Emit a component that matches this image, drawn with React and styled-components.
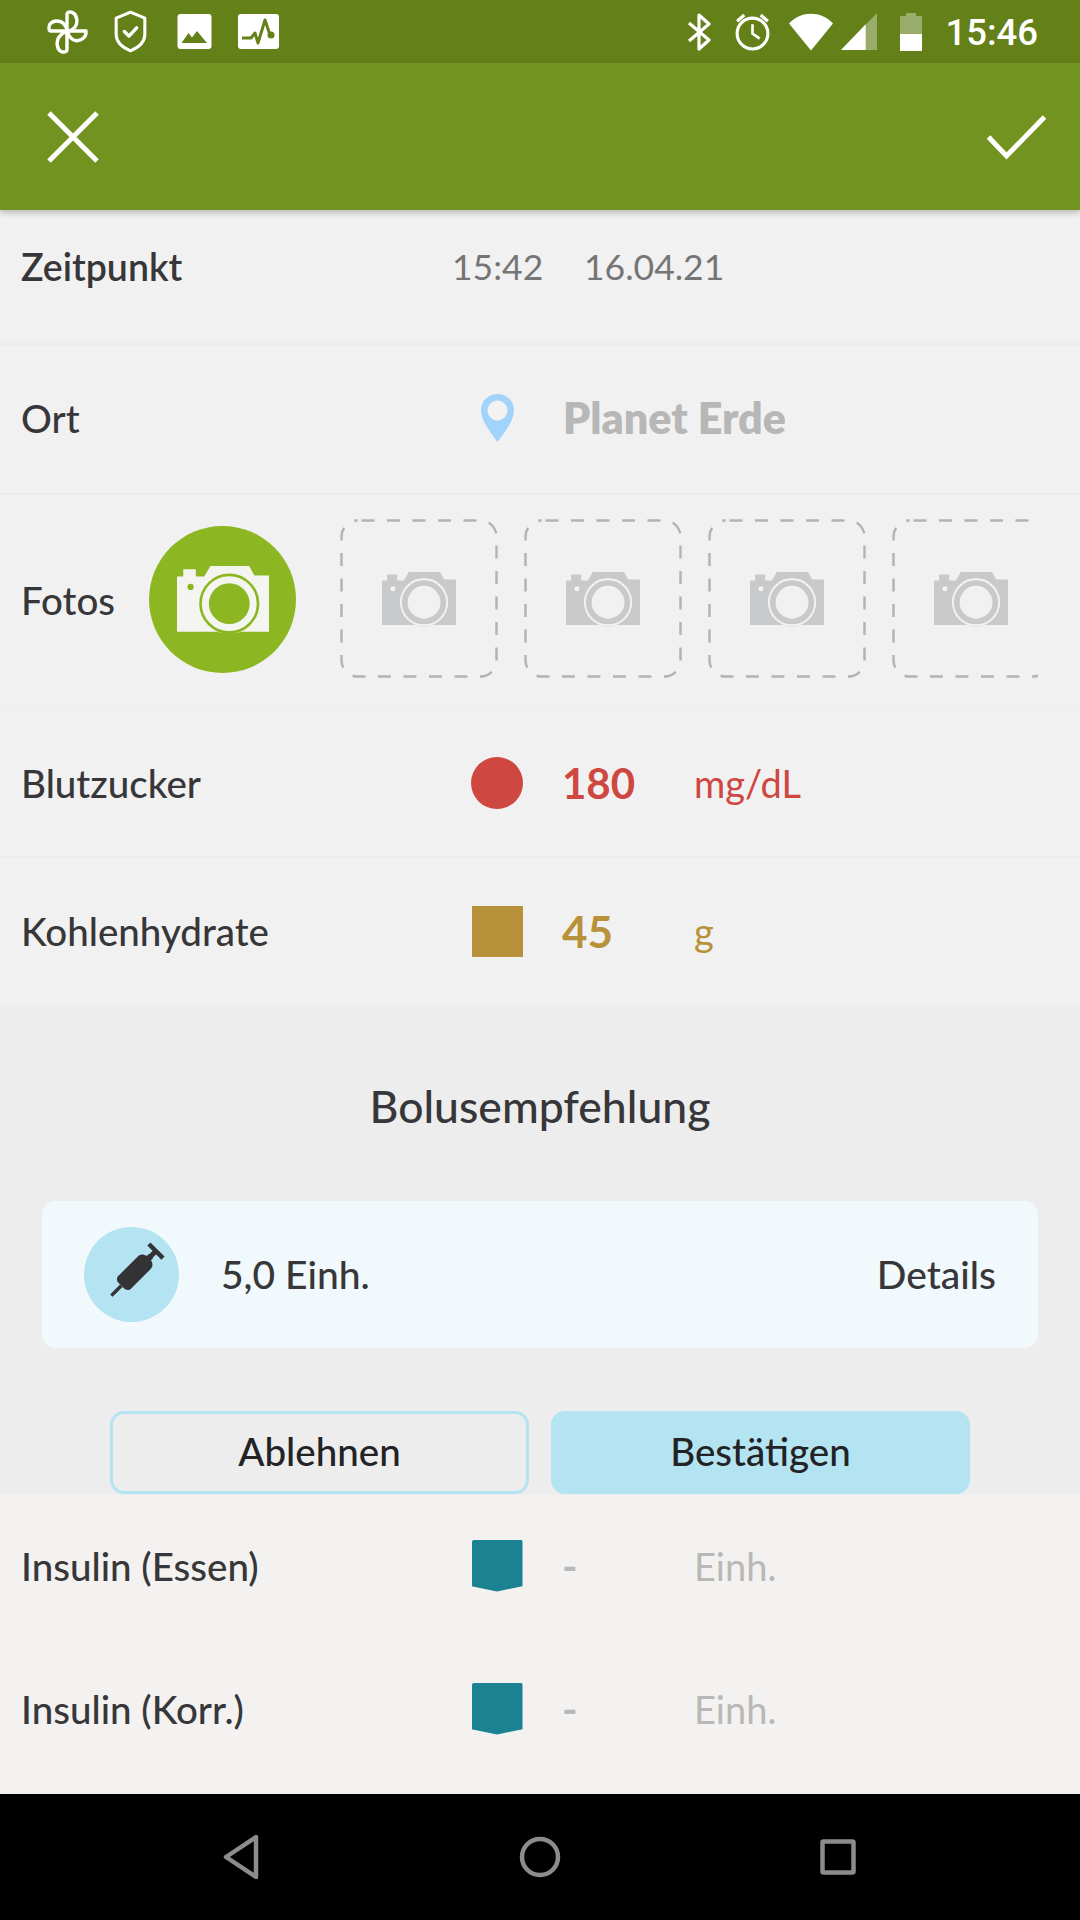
import React from "react";
import styled, { createGlobalStyle } from "styled-components";

const GlobalStyle = createGlobalStyle`
  html, body {
    margin: 0;
    padding: 0;
    background: #000;
  }
  * {
    box-sizing: border-box;
  }
`;

function StatusIcons() {
  return (
    <StatusLeft>
      <StatusItem>
        <svg width="42" height="44" viewBox="0 0 42 44" fill="none" stroke="#fff" strokeWidth="3.4" strokeLinejoin="round">
          <path d="M20 21V4.500C20 2 23 1.500 25.500 2.500C30.500 5 31 13 28 17C26 19.500 23 21 20 21Z" />
          <path d="M21 21H39C40 29 30 33 25 29C22.500 27 21 24 21 21Z" />
          <path d="M20 22V39.500C20 42 16 42.500 14 41.500C9.500 39 9 31 12 27C14 24.500 17 22 20 22Z" />
          <path d="M20 21H4C1.500 21 1.500 16 3 14C6 10 13 10 16.500 13.500C19 16 20 18.500 20 21Z" />
        </svg>
      </StatusItem>
      <StatusItem $gap={25}>
        <svg width="33" height="43" viewBox="0 0 32 42" fill="none" stroke="#fff" strokeWidth="3">
          <path d="M16 2L30 8V24C30 32 23 37 16 40C9 37 2 32 2 24V8Z" strokeLinejoin="round" />
          <path d="M10 21L14.500 25.500L22 17.500" strokeWidth="3.400" strokeLinecap="round" strokeLinejoin="round" />
        </svg>
      </StatusItem>
      <StatusItem $gap={30}>
        <svg width="35" height="35" viewBox="0 0 34 35">
          <rect width="34" height="35" rx="3" fill="#fff" />
          <path d="M4 29L11 19L14.500 23.500L19.500 17L29.500 29Z" fill="#648019" />
        </svg>
      </StatusItem>
      <StatusItem $gap={26}>
        <svg width="41" height="35" viewBox="0 0 41 35">
          <rect width="41" height="35" rx="3" fill="#fff" />
          <path d="M4 24H13L17 19L20 29L27 6L32 21" fill="none" stroke="#648019" strokeWidth="3" strokeLinejoin="round" />
          <circle cx="33" cy="21" r="3.500" fill="#648019" />
        </svg>
      </StatusItem>
    </StatusLeft>
  );
}

function StatusRight() {
  return (
    <StatusRightGroup>
      <StatusItem>
        <svg width="26" height="38" viewBox="0 0 24 38" fill="none" stroke="#fff" strokeWidth="3.200" strokeLinejoin="round">
          <path d="M2 10L22 27L12 36V2L22 11L2 28" />
        </svg>
      </StatusItem>
      <StatusItem $gap={22}>
        <svg width="37" height="39" viewBox="0 0 36 38" fill="none" stroke="#fff" strokeWidth="3">
          <circle cx="18" cy="21" r="15" />
          <path d="M18 12V21L25 26" strokeWidth="2.600" />
          <path d="M3 9L10 3M33 9L26 3" strokeWidth="3.200" />
        </svg>
      </StatusItem>
      <StatusItem $gap={18}>
        <svg width="44" height="38" viewBox="0 0 44 37">
          <path d="M0 10C12 -3 32 -3 44 10L22 37Z" fill="#fff" />
        </svg>
      </StatusItem>
      <StatusItem $gap={8}>
        <svg width="36" height="37" viewBox="0 0 35 36">
          <path d="M0 36L35 0V36Z" fill="#fff" opacity="0.35" />
          <path d="M0 36L24 11V36Z" fill="#fff" />
        </svg>
      </StatusItem>
      <StatusItem $gap={23}>
        <svg width="22" height="40" viewBox="0 0 22 38">
          <path d="M6 0H16V3H22V38H0V3H6Z" fill="#fff" opacity="0.35" />
          <path d="M0 21H22V38H0Z" fill="#fff" />
        </svg>
      </StatusItem>
      <Clock>15:46</Clock>
    </StatusRightGroup>
  );
}

function Camera({ size, body, gap }) {
  return (
    <svg width={size} height={(size * 65) / 88} viewBox="0 0 88 65">
      <path d="M0 10H6V3H18V10H26L32 0H69L74 9H88V63H0Z" fill={body} />
      <circle cx="50" cy="36" r="29" fill={body} />
      <circle cx="50" cy="36" r="27.500" fill="none" stroke={gap} strokeWidth="2.500" />
      <circle cx="50" cy="36" r="19.500" fill={gap} />
      <circle cx="13" cy="20" r="3" fill={gap} />
    </svg>
  );
}

function PhotoSlot() {
  return (
    <Slot>
      <SlotFrame width="158" height="159" viewBox="0 0 158 159">
        <rect x="1.500" y="1.500" width="155" height="156" rx="16" fill="none" stroke="#b4b4b4" strokeWidth="2.500" strokeDasharray="13 12.500" strokeDashoffset="-4" />
      </SlotFrame>
      <SlotCamera>
        <Camera size={74} body="#c8c9ca" gap="#f2f1f1" />
      </SlotCamera>
    </Slot>
  );
}

export default function App() {
  return (
    <Screen>
      <GlobalStyle />
      <StatusBar>
        <StatusIcons />
        <StatusRight />
      </StatusBar>
      <AppBar>
        <svg width="52" height="52" viewBox="0 0 52 52" stroke="#fff" strokeWidth="5">
          <path d="M2 2L50 50M50 2L2 50" />
        </svg>
        <svg width="61" height="46" viewBox="0 0 60 46" fill="none" stroke="#fff" strokeWidth="5">
          <path d="M2 23L20 42L58 3" />
        </svg>
      </AppBar>

      <TimeRow>
        <TimeLabel>Zeitpunkt</TimeLabel>
        <TimeValue>15:42</TimeValue>
        <TimeValue>16.04.21</TimeValue>
      </TimeRow>

      <PlaceRow>
        <Label>Ort</Label>
        <Marker>
          <svg width="33" height="48" viewBox="0 0 33 48">
            <path d="M16.500 0C7 0 0 7 0 16.500C0 27 10 39 16.500 48C23 39 33 27 33 16.500C33 7 26 0 16.500 0Z" fill="#a2d4fb" />
            <circle cx="16.500" cy="16.500" r="10" fill="#f3f2f0" />
          </svg>
        </Marker>
        <Place>Planet Erde</Place>
      </PlaceRow>

      <PhotoRow>
        <PhotoLabel>Fotos</PhotoLabel>
        <CameraButton>
          <Camera size={92} body="#f4f5f1" gap="#8cb622" />
        </CameraButton>
        <PhotoStrip>
          <PhotoSlot />
          <PhotoSlot />
          <PhotoSlot />
          <PhotoSlot />
        </PhotoStrip>
      </PhotoRow>

      <Row $height={146}>
        <Label>Blutzucker</Label>
        <Marker>
          <Dot />
        </Marker>
        <Value $color="#cf4741">180</Value>
        <Unit $color="#cf4741">mg/dL</Unit>
      </Row>

      <CarbRow $height={147}>
        <Label>Kohlenhydrate</Label>
        <Marker>
          <Square />
        </Marker>
        <Value $color="#b8923b" $size={44}>45</Value>
        <Unit $color="#b8923b">g</Unit>
      </CarbRow>

      <BolusSection>
        <BolusTitle>Bolusempfehlung</BolusTitle>
        <BolusCard>
          <SyringeBadge>
            <svg width="56" height="56" viewBox="0 0 56 56" fill="#333335" stroke="#333335" overflow="visible">
              <g transform="translate(2 -1) rotate(45 28 28)">
                <path d="M25 4H31V7C35 8 37 10 37 14V41C37 44 35 46 31 46H25C21 46 19 44 19 41V14C19 10 21 8 25 7Z" stroke="none" />
                <path d="M28 46V60" fill="none" strokeWidth="3.500" />
                <path d="M28 6V-3" fill="none" strokeWidth="5" />
                <path d="M18 -3H38" fill="none" strokeWidth="4.500" />
              </g>
            </svg>
          </SyringeBadge>
          <BolusAmount>5,0 Einh.</BolusAmount>
          <DetailsLink>Details</DetailsLink>
        </BolusCard>
        <BolusActions>
          <ActionButton>Ablehnen</ActionButton>
          <ActionButton $primary>Bestätigen</ActionButton>
        </BolusActions>
      </BolusSection>

      <InsulinRow>
        <Label>Insulin (Essen)</Label>
        <Marker>
          <Pennant />
        </Marker>
        <EmptyValue>-</EmptyValue>
        <Unit $color="#b8b8b8">Einh.</Unit>
      </InsulinRow>
      <InsulinRow>
        <Label>Insulin (Korr.)</Label>
        <Marker>
          <Pennant />
        </Marker>
        <EmptyValue>-</EmptyValue>
        <Unit $color="#b8b8b8">Einh.</Unit>
      </InsulinRow>
      <Spacer />

      <NavBar>
        <svg width="38" height="46" viewBox="0 0 36 46" fill="none" stroke="#8c8c8c" strokeWidth="4.500" strokeLinejoin="round">
          <path d="M33 3V43L3 23Z" />
        </svg>
        <svg width="42" height="42" viewBox="0 0 42 42" fill="none" stroke="#8c8c8c" strokeWidth="4.500">
          <circle cx="21" cy="21" r="18" />
        </svg>
        <svg width="36" height="36" viewBox="0 0 36 36" fill="none" stroke="#8c8c8c" strokeWidth="4.500">
          <rect x="2.500" y="2.500" width="31" height="31" rx="1" />
        </svg>
      </NavBar>
    </Screen>
  );
}

const Screen = styled.div`
  width: 1080px;
  height: 1920px;
  display: flex;
  flex-direction: column;
  overflow: hidden;
  background: #eeedeb;
  color: #37373a;
  font-family: Lato, "Open Sans", sans-serif;
`;

const StatusBar = styled.div`
  height: 63px;
  flex: none;
  display: flex;
  align-items: center;
  justify-content: space-between;
  padding: 0 42px 0 47px;
  background: #648019;
`;

const StatusLeft = styled.div`
  display: flex;
  align-items: center;
`;

const StatusRightGroup = styled.div`
  display: flex;
  align-items: center;
`;

const StatusItem = styled.div`
  display: flex;
  margin-left: ${(p) => p.$gap || 0}px;
`;

const Clock = styled.span`
  margin: 3px 0 0 23px;
  color: #fff;
  font-family: Roboto, sans-serif;
  font-size: 36.500px;
  font-weight: 500;
  line-height: 1;
`;

const AppBar = styled.div`
  height: 147px;
  flex: none;
  position: relative;
  z-index: 1;
  display: flex;
  align-items: center;
  justify-content: space-between;
  padding: 0 33px 0 47px;
  background: #729320;
  box-shadow: 0 3px 6px rgba(60, 60, 60, 0.3);
`;

const Row = styled.div`
  height: ${(p) => p.$height}px;
  flex: none;
  display: grid;
  grid-template-columns: 471px 91px 132px 1fr;
  align-items: center;
  padding-left: 21px;
  margin-bottom: 2px;
  background: #f2f1f1;
`;

const PlaceRow = styled(Row)`
  height: 147px;
  padding-bottom: 4px;
`;

const CarbRow = styled(Row)`
  padding-bottom: 1px;
  margin-bottom: 0;
`;

const TimeRow = styled.div`
  height: 130px;
  flex: none;
  display: flex;
  align-items: center;
  padding: 0 0 18px 21px;
  margin-bottom: 6px;
  background: #f2f1f1;
`;

const Label = styled.div`
  width: 450px;
  font-size: 38.500px;
  font-weight: 500;
  color: #37373a;
  white-space: nowrap;
`;

const TimeLabel = styled(Label)`
  width: 431px;
  font-size: 37.500px;
  font-weight: 600;
`;

const TimeValue = styled.span`
  width: 132px;
  font-size: 35.500px;
  color: #757575;
  white-space: nowrap;
`;

const Marker = styled.div`
  width: 52px;
  display: flex;
  justify-content: center;
  align-items: center;
  margin-left: -21px;
`;

const Place = styled.span`
  font-size: 43px;
  font-weight: 800;
  color: #b7b7b7;
  white-space: nowrap;
  margin-left: -20px;
`;

const Value = styled.span`
  font-size: ${(p) => p.$size || 42}px;
  font-weight: 700;
  color: ${(p) => p.$color};
  margin-left: -21px;
`;

const Unit = styled.span`
  font-size: 38px;
  color: ${(p) => p.$color};
  margin-left: -21px;
`;

const EmptyValue = styled.span`
  font-size: 42px;
  font-weight: 700;
  color: #b8b8b8;
  margin-left: -21px;
`;

const Dot = styled.div`
  width: 52px;
  height: 52px;
  border-radius: 50%;
  background: #cf4741;
`;

const Square = styled.div`
  width: 51px;
  height: 51px;
  background: #b8923b;
`;

const Pennant = styled.div`
  width: 51px;
  height: 52px;
  border-radius: 2px;
  background: #1b8291;
  clip-path: polygon(0 0, 100% 0, 100% 90%, 50% 100%, 0 90%);
`;

const PhotoRow = styled.div`
  height: 214px;
  flex: none;
  display: flex;
  align-items: center;
  padding: 0 0 5px 21px;
  margin-bottom: 1px;
  background: #f2f1f1;
`;

const PhotoLabel = styled(Label)`
  width: 128px;
`;

const CameraButton = styled.div`
  width: 147px;
  height: 147px;
  flex: none;
  display: flex;
  align-items: center;
  justify-content: center;
  border-radius: 50%;
  background: #8cb622;
`;

const PhotoStrip = styled.div`
  width: 698px;
  margin: -3px 0 0 44px;
  display: flex;
  gap: 26px;
  overflow: hidden;
`;

const Slot = styled.div`
  width: 158px;
  height: 159px;
  flex: none;
  position: relative;
  display: flex;
  align-items: center;
  justify-content: center;
`;

const SlotFrame = styled.svg`
  position: absolute;
  inset: 0;
`;

const SlotCamera = styled.div`
  display: flex;
  margin-top: 3px;
`;

const BolusSection = styled.section`
  height: 490px;
  flex: none;
  display: flex;
  flex-direction: column;
  align-items: center;
  background: #ededed;
`;

const BolusTitle = styled.h2`
  margin: 75px 0 0;
  height: 52px;
  font-size: 44.500px;
  line-height: 52px;
  font-weight: 500;
  color: #37373a;
`;

const BolusCard = styled.div`
  width: 996px;
  height: 147px;
  margin-top: 69px;
  display: flex;
  align-items: center;
  padding: 0 42px;
  border-radius: 14px;
  background: #f1f9fc;
`;

const SyringeBadge = styled.div`
  width: 95px;
  height: 95px;
  flex: none;
  display: flex;
  align-items: center;
  justify-content: center;
  border-radius: 50%;
  background: #b4e4f2;
  margin-top: -1px;
`;

const BolusAmount = styled.span`
  margin: -2px 0 0 42px;
  font-size: 39px;
  font-weight: 500;
`;

const DetailsLink = styled.span`
  margin: -2px 0 0 auto;
  font-size: 39px;
  font-weight: 500;
`;

const BolusActions = styled.div`
  margin-top: 63px;
  display: flex;
  gap: 22px;
`;

const ActionButton = styled.button`
  width: 419px;
  height: 83px;
  padding: 0 0 3px;
  border: 3px solid #b4e4f2;
  border-radius: 14px;
  background: ${(p) => (p.$primary ? "#b4e4f2" : "transparent")};
  color: #232325;
  font-family: inherit;
  font-size: 38.500px;
  font-weight: 500;
`;

const InsulinRow = styled(Row)`
  height: 143px;
  margin-bottom: 0;
  padding-bottom: 2px;
  background: #f3f2f0;
`;

const Spacer = styled.div`
  flex: 1;
  background: #f3f2f0;
`;

const NavBar = styled.nav`
  height: 126px;
  flex: none;
  display: flex;
  align-items: center;
  justify-content: space-between;
  padding: 0 224px 0 222px;
  background: #000;
`;
